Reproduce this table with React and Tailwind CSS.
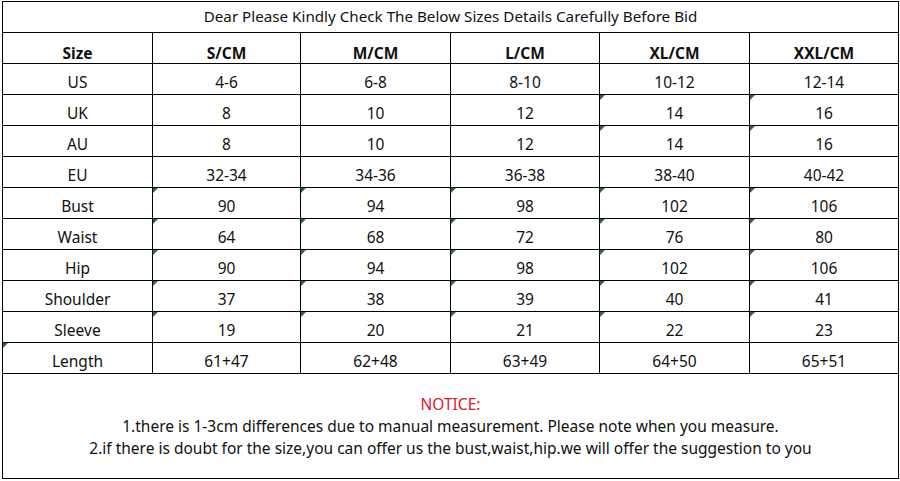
const widths = ["w-[150px]", "w-[148px]", "w-[150px]", "w-[149px]", "w-[150px]", "w-[148px]"];

const header = ["Size", "S/CM", "M/CM", "L/CM", "XL/CM", "XXL/CM"];

// marks: column indexes that carry the little green corner flag
const rows = [
  { cells: ["US", "4-6", "6-8", "8-10", "10-12", "12-14"], marks: [] },
  { cells: ["UK", "8", "10", "12", "14", "16"], marks: [4, 5] },
  { cells: ["AU", "8", "10", "12", "14", "16"], marks: [4, 5] },
  { cells: ["EU", "32-34", "34-36", "36-38", "38-40", "40-42"], marks: [] },
  { cells: ["Bust", "90", "94", "98", "102", "106"], marks: [1, 2, 3, 4, 5] },
  { cells: ["Waist", "64", "68", "72", "76", "80"], marks: [1, 2, 3, 4, 5] },
  { cells: ["Hip", "90", "94", "98", "102", "106"], marks: [1, 2, 3, 4, 5] },
  { cells: ["Shoulder", "37", "38", "39", "40", "41"], marks: [1, 2, 3, 4, 5] },
  { cells: ["Sleeve", "19", "20", "21", "22", "23"], marks: [1, 2, 3, 4, 5] },
  { cells: ["Length", "61+47", "62+48", "63+49", "64+50", "65+51"], marks: [0] },
];

const Flag = () => (
  <span className="absolute left-0 top-0 w-0 h-0 border-t-[5px] border-r-[5px] border-t-[#2f6b2f] border-r-transparent" />
);

const Row = ({ cells, marks = [], bold }) => (
  <div className="flex h-[31px] border-b border-black">
    {cells.map((c, i) => (
      <div
        key={i}
        className={`relative flex items-center justify-center ${widths[i]} ${i < 5 ? "border-r border-black" : ""} ${bold ? "font-bold pt-[12px]" : "pt-[8px]"}`}
      >
        {marks.includes(i) && <Flag />}
        {c}
      </div>
    ))}
  </div>
);

export default function App() {
  return (
    <div className="w-[900px] h-[481px] bg-white pt-[1px] pl-[2px] text-[#111] text-[15.5px] font-['Noto_Sans',sans-serif] leading-none">
      <div className="w-[897px] border border-black">
        <div className="flex items-center justify-center h-[31px] border-b border-black text-[15.2px]">
          Dear Please Kindly Check The Below Sizes Details Carefully Before Bid
        </div>
        <Row cells={header} bold />
        {rows.map((r, i) => (
          <Row key={i} cells={r.cells} marks={r.marks} />
        ))}
        <div className="flex flex-col items-center justify-center h-[104px] pt-[2px] gap-[6.5px]">
          <p className="text-[#e0142c]">NOTICE:</p>
          <p>1.there is 1-3cm differences due to manual measurement. Please note when you measure.</p>
          <p>2.if there is doubt for the size,you can offer us the bust,waist,hip.we will offer the suggestion to you</p>
        </div>
      </div>
    </div>
  );
}
